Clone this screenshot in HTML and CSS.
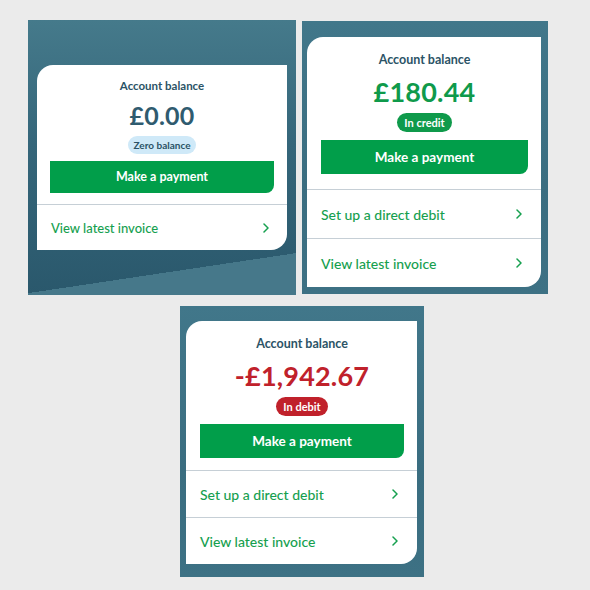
FILE: index.html
```html
<!DOCTYPE html>
<html lang="en">
<head>
<meta charset="utf-8">
<title>Account balance cards</title>
<link rel="stylesheet" href="styles.css">
</head>
<body>
<div class="page">
  <div class="row row-top">
    <section class="panel panel-one">
      <div class="card card-compact">
        <div class="card-top">
          <h2 class="title">Account balance</h2>
          <div class="amount amount-zero">£0.00</div>
          <span class="badge badge-zero">Zero balance</span>
          <a class="pay-btn" href="#">Make a payment</a>
        </div>
        <a class="link-row" href="#"><span>View latest invoice</span><svg class="chev" viewBox="0 0 6 10" width="6" height="10"><polyline points="1,1 5,5 1,9"/></svg></a>
      </div>
    </section>
    <section class="panel panel-two">
      <div class="card">
        <div class="card-top">
          <h2 class="title">Account balance</h2>
          <div class="amount amount-credit">£180.44</div>
          <span class="badge badge-credit">In credit</span>
          <a class="pay-btn" href="#">Make a payment</a>
        </div>
        <a class="link-row" href="#"><span>Set up a direct debit</span><svg class="chev" viewBox="0 0 6 10" width="6" height="10"><polyline points="1,1 5,5 1,9"/></svg></a>
        <a class="link-row" href="#"><span>View latest invoice</span><svg class="chev" viewBox="0 0 6 10" width="6" height="10"><polyline points="1,1 5,5 1,9"/></svg></a>
      </div>
    </section>
  </div>
  <div class="row row-bottom">
    <section class="panel panel-three">
      <div class="card">
        <div class="card-top">
          <h2 class="title">Account balance</h2>
          <div class="amount amount-debit">-£1,942.67</div>
          <span class="badge badge-debit">In debit</span>
          <a class="pay-btn" href="#">Make a payment</a>
        </div>
        <a class="link-row" href="#"><span>Set up a direct debit</span><svg class="chev" viewBox="0 0 6 10" width="6" height="10"><polyline points="1,1 5,5 1,9"/></svg></a>
        <a class="link-row" href="#"><span>View latest invoice</span><svg class="chev" viewBox="0 0 6 10" width="6" height="10"><polyline points="1,1 5,5 1,9"/></svg></a>
      </div>
    </section>
  </div>
</div>
</body>
</html>
```
FILE: styles.css
```css
* { box-sizing: border-box; }

html, body {
  margin: 0;
  padding: 0;
  background: #ebebeb;
  font-family: Lato, "Open Sans", "Liberation Sans", sans-serif;
}

.page {
  padding: 20px 0 0 28px;
}

.row {
  display: flex;
  align-items: flex-start;
  gap: 6px;
}

.row-bottom {
  margin-top: 11px;
  padding-left: 152px;
}

.panel {
  background: linear-gradient(180deg, #41778a 0%, #3a6d80 60%, #3d7184 100%);
}

.panel-one {
  width: 268px;
  height: 275px;
  padding: 45px 0 0 9px;
  background:
    linear-gradient(171.5deg, transparent 86.7%, #46788a 86.7%),
    linear-gradient(180deg, #457a8b 0%, #35667a 45%, #2a586c 100%);
}

.panel-two {
  width: 246px;
  height: 273px;
  margin-top: 1px;
  padding: 16px 0 0 5px;
}

.panel-three {
  width: 244px;
  height: 271px;
  padding: 15px 0 0 6px;
}

.card {
  background: #ffffff;
  border-radius: 16px 0 16px 0;
  overflow: hidden;
}

.panel-one .card { width: 250px; }
.panel-two .card { width: 234px; }
.panel-three .card { width: 231px; }

.card-top {
  display: flex;
  flex-direction: column;
  align-items: center;
  padding: 15px 13px 13px 14px;
}

.panel-two .card-top { padding-bottom: 15px; }
.panel-two .link-row { height: 49px; }
.panel-three .card-top { padding-bottom: 12px; }
.panel-three .link-row { height: 47px; }

.title {
  margin: 0;
  font-size: 12.5px;
  line-height: 16px;
  font-weight: 700;
  color: #2b5366;
}

.amount {
  margin-top: 8px;
  font-size: 27px;
  line-height: 32px;
  font-weight: 700;
  letter-spacing: 0.2px;
}

.amount-zero { color: #2f5b6f; }
.amount-credit { color: #0f9a4b; }
.amount-debit { color: #c0212b; }

.badge {
  margin-top: 5px;
  height: 19px;
  padding: 0 7px;
  border-radius: 10px;
  font-size: 11px;
  line-height: 19px;
  font-weight: 700;
}

.badge-zero { background: #cfe9f8; color: #2b5366; }
.badge-credit { background: #0f9a4b; color: #ffffff; }
.badge-debit { background: #c0212b; color: #ffffff; }

.pay-btn {
  align-self: stretch;
  margin-top: 8px;
  height: 34px;
  border-radius: 0 0 8px 0;
  background: #019e4a;
  color: #ffffff;
  text-decoration: none;
  font-size: 13.5px;
  line-height: 34px;
  font-weight: 700;
  text-align: center;
}

.link-row {
  display: flex;
  align-items: center;
  justify-content: space-between;
  height: 48px;
  padding: 0 19px 0 14px;
  border-top: 1.5px solid #c6cfd6;
  color: #16a04f;
  text-decoration: none;
  font-size: 14px;
  font-weight: 500;
}

.chev {
  fill: none;
  stroke: #16a04f;
  stroke-width: 1.5;
  stroke-linecap: round;
  stroke-linejoin: round;
}

/* compact variant (first card is rendered slightly smaller) */
.card-compact .card-top {
  padding: 13px 13px 11px 13px;
}
.card-compact .title { font-size: 11.5px; }
.card-compact .amount {
  margin-top: 6px;
  font-size: 25px;
  line-height: 30px;
}
.card-compact .badge {
  margin-top: 6px;
  height: 18px;
  padding: 0 6px;
  font-size: 10px;
  line-height: 18px;
}
.card-compact .pay-btn {
  margin-top: 7px;
  height: 32px;
  font-size: 12.5px;
  line-height: 32px;
}
.card-compact .link-row {
  height: 46px;
  padding: 0 18px 0 14px;
  font-size: 13px;
}
```
